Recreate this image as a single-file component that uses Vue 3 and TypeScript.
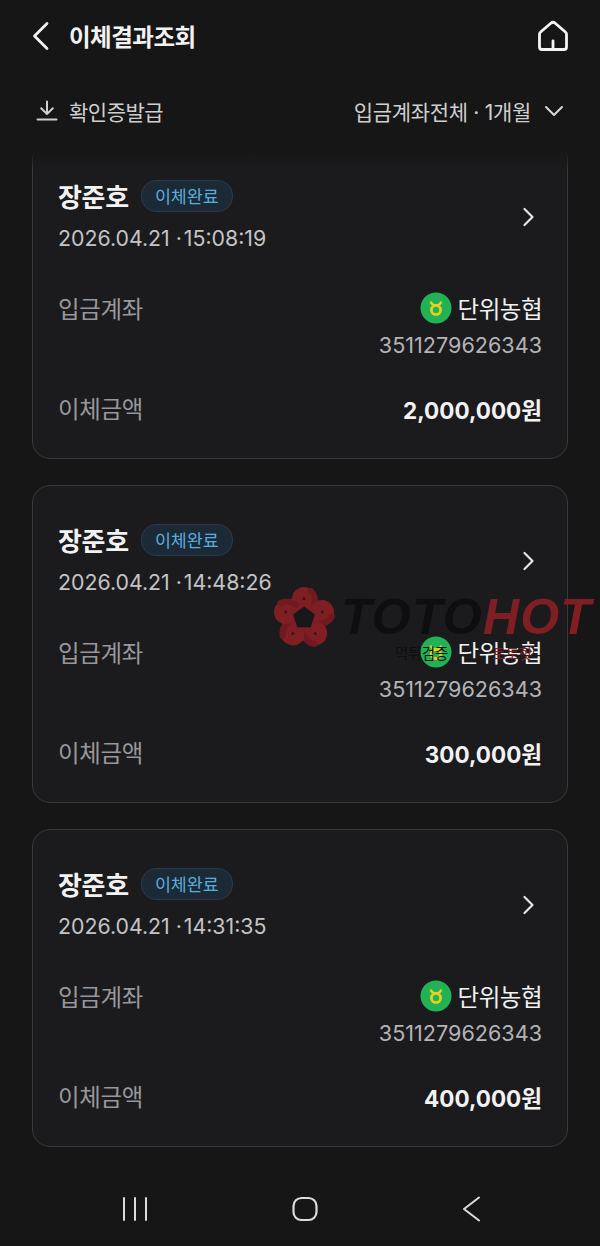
<script setup lang="ts">
interface Transfer {
  name: string
  time: string
  bank: string
  account: string
  amount: string
}

const transfers: Transfer[] = [
  { name: '장준호', time: '2026.04.21 ·\u200a15:08:19', bank: '단위농협', account: '3511279626343', amount: '2,000,000원' },
  { name: '장준호', time: '2026.04.21 ·\u200a14:48:26', bank: '단위농협', account: '3511279626343', amount: '300,000원' },
  { name: '장준호', time: '2026.04.21 ·\u200a14:31:35', bank: '단위농협', account: '3511279626343', amount: '400,000원' },
]

// petals of the watermark star, one every 72deg
const petals = [0, 72, 144, 216, 288]
</script>

<template>
  <div class="screen">
    <header class="top-bar">
      <div class="title-wrap">
        <svg class="back" width="20" height="30" viewBox="0 0 20 30" fill="none">
          <path d="M16 2.5 3.5 15 16 27.5" stroke="#f2f2f2" stroke-width="2.8" stroke-linecap="round" stroke-linejoin="round" />
        </svg>
        <h1>이체결과조회</h1>
      </div>
      <svg class="home" width="32" height="32" viewBox="0 0 32 32" fill="none">
        <path
          d="M13.8 3.2 3.6 12a3 3 0 0 0-1.1 2.3V27a2.5 2.5 0 0 0 2.5 2.5h22a2.5 2.5 0 0 0 2.5-2.5V14.3a3 3 0 0 0-1.1-2.3L18.2 3.2a3.4 3.4 0 0 0-4.4 0Z"
          stroke="#f4f4f4"
          stroke-width="2.8"
          stroke-linejoin="round"
        />
        <path d="M16 21v8" stroke="#f4f4f4" stroke-width="2.8" stroke-linecap="round" />
      </svg>
    </header>

    <div class="tool-bar">
      <div class="receipt">
        <svg width="22" height="22" viewBox="0 0 22 22" fill="none">
          <path d="M11 1.5v12M5.2 8.2 11 14l5.8-5.8M1.5 19.5h19" stroke="#cfcfcf" stroke-width="2" stroke-linecap="round" stroke-linejoin="round" />
        </svg>
        <span>확인증발급</span>
      </div>
      <div class="filter">
        <span>입금계좌전체 · 1개월</span>
        <svg width="20" height="12" viewBox="0 0 20 12" fill="none">
          <path d="M2 2l8 8 8-8" stroke="#d8d8d8" stroke-width="2" stroke-linecap="round" stroke-linejoin="round" />
        </svg>
      </div>
    </div>

    <main class="list">
      <article v-for="(item, i) in transfers" :key="i" class="card">
        <div class="card-head">
          <div>
            <div class="name-row">
              <strong class="name">{{ item.name }}</strong>
              <span class="badge">이체완료</span>
            </div>
            <div class="time">{{ item.time }}</div>
          </div>
          <svg class="chevron" width="14" height="20" viewBox="0 0 14 20" fill="none">
            <path d="M2.5 2 10.5 10l-8 8" stroke="#e4e4e4" stroke-width="2.2" stroke-linecap="round" stroke-linejoin="round" />
          </svg>
        </div>
        <div class="account-row">
          <span class="label">입금계좌</span>
          <div class="account">
            <div class="bank">
              <svg width="32" height="32" viewBox="0 0 32 32" fill="none">
                <circle cx="16" cy="16" r="15.5" fill="#22b255" />
                <circle cx="16" cy="18" r="4.6" stroke="#e6d21c" stroke-width="2.8" />
                <path d="M10.8 9.5c.6 2.6 2.6 3.8 5.2 3.8s4.6-1.2 5.2-3.8" stroke="#e6d21c" stroke-width="2.4" />
              </svg>
              <span>{{ item.bank }}</span>
            </div>
            <div class="number">{{ item.account }}</div>
          </div>
        </div>
        <div class="amount-row">
          <span class="label">이체금액</span>
          <strong class="amount">{{ item.amount }}</strong>
        </div>
      </article>
      <div class="top-fade"></div>
    </main>

    <nav class="nav-bar">
      <svg width="24" height="26" viewBox="0 0 24 26" fill="none">
        <path d="M1 2v22M12 2v22M23 2v22" stroke="#dcdcdc" stroke-width="2" stroke-linecap="round" />
      </svg>
      <svg width="26" height="26" viewBox="0 0 26 26" fill="none">
        <rect x="1.5" y="2" width="23" height="22" rx="8" stroke="#dcdcdc" stroke-width="2.2" />
      </svg>
      <svg width="18" height="26" viewBox="0 0 18 26" fill="none">
        <path d="M17 1.5 2 13l15 11.5" stroke="#dcdcdc" stroke-width="2" stroke-linecap="round" stroke-linejoin="round" />
      </svg>
    </nav>

    <div class="watermark">
      <svg width="62" height="62" viewBox="0 0 62 62" fill="none">
        <circle cx="31" cy="32" r="23" fill="#7f1e23" />
        <g v-for="deg in petals" :key="deg" :transform="`rotate(${deg} 31 32)`">
          <circle cx="31" cy="13" r="12" fill="#7f1e23" />
          <path d="M38 5c4 4 5 9 3 15" stroke="#701a1f" stroke-width="6" stroke-linecap="round" />
          <path d="M29 14h4l-2-3.5Z" fill="#3a1619" />
        </g>
        <path d="M31 20.5 41.9 28.4 37.8 41.3H24.2L20.1 28.4Z" fill="#18181a" />
      </svg>
      <div class="mark-text">
        <div class="mark-logo"><span class="dark">TOTO</span><span class="red">HOT</span></div>
        <div class="mark-sub"><span class="dark">먹튀검증</span><span class="red">토토핫</span></div>
      </div>
    </div>
  </div>
</template>

<style scoped>
.screen {
  position: relative;
  width: 600px;
  height: 1246px;
  overflow: hidden;
  background: #161617;
  color: #f2f2f2;
  font-family: Inter, "Noto Sans CJK KR", sans-serif;
}

.top-bar {
  height: 72px;
  padding: 0 31px;
  display: flex;
  align-items: center;
  justify-content: space-between;
  box-sizing: border-box;
}

.title-wrap {
  display: flex;
  align-items: center;
  gap: 18px;
}

h1 {
  margin: 0;
  font-size: 23.5px;
  font-weight: 700;
  letter-spacing: -0.5px;
}

.tool-bar {
  height: 78px;
  padding: 0 36px;
  display: flex;
  align-items: center;
  justify-content: space-between;
  box-sizing: border-box;
  font-size: 21px;
  color: #cfcfcf;
  letter-spacing: -0.5px;
}

.receipt,
.filter {
  display: flex;
  align-items: center;
}

.receipt {
  gap: 11px;
}

.filter {
  gap: 13px;
  letter-spacing: -0.3px;
}

.list {
  position: relative;
  height: 1010px;
  overflow: hidden;
  padding: 0 32px;
  display: flex;
  flex-direction: column;
  gap: 26px;
}

.top-fade {
  position: absolute;
  top: 0;
  left: 0;
  right: 0;
  height: 20px;
  background: linear-gradient(#161617, rgba(22, 22, 23, 0));
}

.card {
  flex: none;
  height: 318px;
  box-sizing: border-box;
  padding: 0 25px;
  border: 1px solid #3a3a3d;
  border-radius: 18px;
  background: #1b1b1d;
}

.card:first-child {
  margin-top: -9px;
}

.card-head {
  display: flex;
  align-items: flex-start;
  justify-content: space-between;
  padding-top: 35px;
  height: 125px;
  box-sizing: border-box;
}

.name-row {
  display: flex;
  align-items: center;
  gap: 12px;
}

.name {
  font-size: 26px;
  font-weight: 700;
  letter-spacing: -0.3px;
}

.badge {
  height: 30px;
  padding: 0 13px;
  display: flex;
  align-items: center;
  border: 1px solid #2b3b4b;
  border-radius: 15px;
  background: #1c2a38;
  color: #5aaedc;
  font-size: 17.4px;
}

.time {
  margin-top: 11px;
  font-size: 21.3px;
  color: #c4c4c4;
}

.chevron {
  margin-top: 30px;
  margin-right: 6px;
}

.account-row {
  display: flex;
  justify-content: space-between;
  margin-top: 24px;
}

.label {
  font-size: 23.4px;
  color: #98989c;
  letter-spacing: -0.3px;
}

.account {
  display: flex;
  flex-direction: column;
  align-items: flex-end;
}

.bank {
  display: flex;
  align-items: center;
  gap: 6px;
  font-size: 23.5px;
  letter-spacing: -0.5px;
}

.number {
  margin-top: 7px;
  font-size: 21.6px;
  color: #b4b4b8;
}

.amount-row {
  display: flex;
  justify-content: space-between;
  align-items: center;
  margin-top: 33px;
}

.amount {
  padding-top: 1px;
  font-size: 22.5px;
  font-weight: 700;
}

.nav-bar {
  position: absolute;
  left: 123px;
  right: 120px;
  bottom: 24px;
  display: flex;
  justify-content: space-between;
  align-items: center;
}

.watermark {
  position: absolute;
  left: 273px;
  top: 586px;
  display: flex;
  gap: 6px;
  pointer-events: none;
}

.mark-text {
  position: relative;
}

.mark-logo {
  font-family: "Liberation Sans", sans-serif;
  font-size: 50px;
  font-weight: 700;
  font-style: italic;
  line-height: 62px;
  letter-spacing: 1.2px;
}

.dark {
  color: #0e0e0f;
}

.red {
  color: #7f1e23;
}

.mark-sub {
  position: absolute;
  left: 54px;
  top: 56px;
  display: flex;
  gap: 44px;
  font-size: 14.5px;
  white-space: nowrap;
}
</style>

<style>
body {
  background: #161617;
}
</style>
